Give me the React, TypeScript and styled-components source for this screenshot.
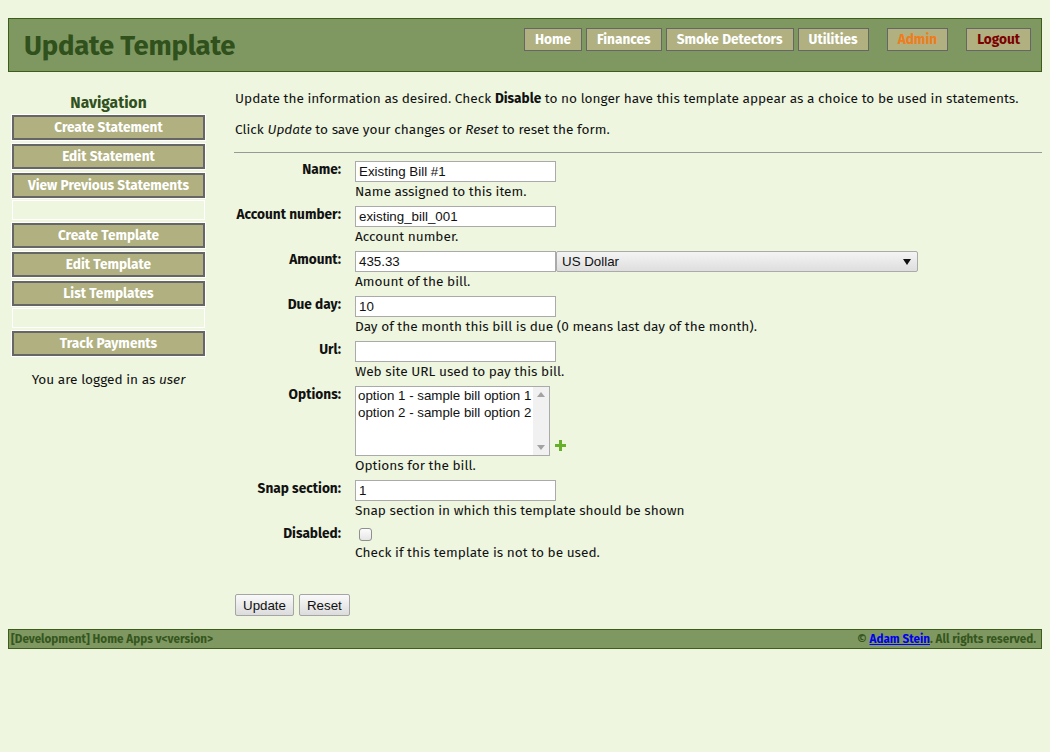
import React from "react";
import styled, { createGlobalStyle } from "styled-components";

const Global = createGlobalStyle`
  html, body { margin: 0; padding: 0; background: #eef6e0; }
  body { font-family: "Fira Sans", "Lato", "Open Sans", sans-serif; font-size: 13.65px; color: #111; }
  * { box-sizing: border-box; }
`;

const Page = styled.div`
  padding: 18px 8px 0 8px;
  width: 1050px;
`;

const Header = styled.header`
  height: 54px;
  background: #7f9862;
  border: 1px solid #3d5e1a;
  display: flex;
  align-items: center;
  justify-content: space-between;
  padding: 0 10px 0 15px;
`;

const Title = styled.h1`
  margin: 0;
  font-size: 27.5px;
  font-weight: 700;
  color: #30501c;
  letter-spacing: -0.2px;
`;

const TopNav = styled.nav`
  display: flex;
  align-items: center;
  gap: 4px;
  margin-top: -12px;
`;

const TopButton = styled.a<{ $tone?: "admin" | "logout"; $gap?: number }>`
  display: inline-flex;
  align-items: center;
  height: 23px;
  padding: 0 10px;
  background: #b0b080;
  border: 1px solid #666;
  font-weight: 700;
  font-size: 13.65px;
  text-decoration: none;
  color: ${(p) => (p.$tone === "admin" ? "#f07c1c" : p.$tone === "logout" ? "#7c0000" : "#fff")};
  margin-left: ${(p) => p.$gap ?? 0}px;
`;

const Body = styled.div`
  display: grid;
  grid-template-columns: 197px 1fr;
  column-gap: 30px;
  margin-top: 20px;
`;

const Sidebar = styled.aside`
  padding-left: 4px;
  display: flex;
  flex-direction: column;
  align-items: stretch;
`;

const NavHeading = styled.h2`
  margin: 1px 0 3px 0;
  text-align: center;
  font-size: 15.6px;
  font-weight: 700;
  color: #30501c;
`;

const SideButton = styled.a`
  display: flex;
  align-items: center;
  justify-content: center;
  height: 25px;
  margin-bottom: 4px;
  background: #b0b080;
  border: 2px solid #666;
  box-shadow: 0 0 0 1px #fff;
  color: #fff;
  font-weight: 700;
  font-size: 13.65px;
  text-decoration: none;
`;

const SideSpacer = styled.div`
  height: 20px;
  margin: -2px 0 3px 0;
  border: 1px solid #fff;
`;

const LoggedIn = styled.p`
  margin: 11px 0 0 0;
  text-align: center;
  font-size: 13.65px;
`;

const Main = styled.main`
  margin-top: -3px;
`;

const Para = styled.p`
  margin: 0 0 12px 0;
  line-height: 19px;
`;

const Rule = styled.hr`
  border: 0;
  border-top: 1px solid #999;
  margin: 13px 0 8px -1px;
`;

const Form = styled.div`
  display: grid;
  grid-template-columns: 106px 1fr;
  column-gap: 14px;
  row-gap: 6px;
`;

const Label = styled.label`
  text-align: right;
  font-weight: 700;
  font-size: 13.65px;
  line-height: 18px;
  white-space: nowrap;
`;

const Field = styled.div`
  display: flex;
  flex-direction: column;
  align-items: flex-start;
`;

const Control = styled.div`
  display: flex;
  align-items: flex-end;
`;

const TextInput = styled.input`
  width: 201px;
  height: 21px;
  border: 1px solid #aaa;
  background: #fff;
  font-family: "Liberation Sans", Arial, sans-serif;
  font-size: 13.33px;
  padding: 1px 3px;
  color: #111;
  margin: 0;
`;

const Select = styled.div`
  width: 362px;
  height: 21px;
  border: 1px solid #aaa;
  border-radius: 2px;
  background: linear-gradient(#f4f4f4, #dedede);
  font-family: "Liberation Sans", Arial, sans-serif;
  font-size: 13.33px;
  display: flex;
  align-items: center;
  justify-content: space-between;
  padding: 0 6px 0 5px;
`;

const ListBox = styled.div`
  width: 195px;
  height: 70px;
  border: 1px solid #aaa;
  background: #fff;
  display: flex;
  font-family: "Liberation Sans", Arial, sans-serif;
  font-size: 13.33px;
`;

const ListItems = styled.div`
  flex: 1;
  padding: 0 0 0 2px;
  line-height: 17px;
  white-space: nowrap;
  overflow: hidden;
`;

const ScrollTrack = styled.div`
  width: 16px;
  background: #f1f1f1;
  display: flex;
  flex-direction: column;
  justify-content: space-between;
  align-items: center;
  padding: 5px 0;
`;

const AddIcon = styled.span`
  margin: 0 0 5px 5px;
  display: inline-flex;
`;

const Help = styled.div`
  margin-top: 1px;
  line-height: 17px;
  font-size: 13.65px;
`;

const Check = styled.span`
  display: inline-block;
  width: 13px;
  height: 13px;
  margin: 3px 0 2px 4px;
  border: 1px solid #8f8f8f;
  border-radius: 3px;
  background: linear-gradient(#fcfcfc, #e6e6e6);
`;

const Actions = styled.div`
  display: flex;
  gap: 5px;
  margin-top: 33px;
`;

const Button = styled.button`
  height: 22px;
  padding: 0 7px;
  border: 1px solid #a5a5a5;
  border-radius: 2px;
  background: linear-gradient(#fafafa, #dcdcdc);
  font-family: "Liberation Sans", Arial, sans-serif;
  font-size: 13.33px;
  color: #111;
`;

const Footer = styled.footer`
  margin-top: 13px;
  height: 20px;
  background: #7f9862;
  border: 1px solid #3d5e1a;
  display: flex;
  align-items: center;
  justify-content: space-between;
  padding: 0 5px 0 2px;
  font-size: 11.7px;
  font-weight: 700;
  color: #35561d;
`;

const FooterLink = styled.a`
  color: #0000ee;
  text-decoration: underline;
`;

const Arrow = ({ up }: { up?: boolean }) => (
  <svg width="8" height="5" viewBox="0 0 8 5">
    <path d={up ? "M0 5 L4 0 L8 5 Z" : "M0 0 L8 0 L4 5 Z"} fill="#a3a3a3" />
  </svg>
);

const rows: { label: string; value: string; help: string }[] = [
  { label: "Name:", value: "Existing Bill #1", help: "Name assigned to this item." },
  { label: "Account number:", value: "existing_bill_001", help: "Account number." },
];

export default function App() {
  return (
    <>
      <Global />
      <Page>
        <Header>
          <Title>Update Template</Title>
          <TopNav>
            <TopButton href="#">Home</TopButton>
            <TopButton href="#">Finances</TopButton>
            <TopButton href="#">Smoke Detectors</TopButton>
            <TopButton href="#">Utilities</TopButton>
            <TopButton href="#" $tone="admin" $gap={14}>Admin</TopButton>
            <TopButton href="#" $tone="logout" $gap={14}>Logout</TopButton>
          </TopNav>
        </Header>
        <Body>
          <Sidebar>
            <NavHeading>Navigation</NavHeading>
            <SideButton href="#">Create Statement</SideButton>
            <SideButton href="#">Edit Statement</SideButton>
            <SideButton href="#">View Previous Statements</SideButton>
            <SideSpacer />
            <SideButton href="#">Create Template</SideButton>
            <SideButton href="#">Edit Template</SideButton>
            <SideButton href="#">List Templates</SideButton>
            <SideSpacer />
            <SideButton href="#">Track Payments</SideButton>
            <LoggedIn>
              You are logged in as <i>user</i>
            </LoggedIn>
          </Sidebar>
          <Main>
            <Para>
              Update the information as desired. Check <b>Disable</b> to no longer have this template appear as a choice to be used in statements.
            </Para>
            <Para>
              Click <i>Update</i> to save your changes or <i>Reset</i> to reset the form.
            </Para>
            <Rule />
            <Form>
              {rows.map((r) => (
                <React.Fragment key={r.label}>
                  <Label>{r.label}</Label>
                  <Field>
                    <TextInput defaultValue={r.value} />
                    <Help>{r.help}</Help>
                  </Field>
                </React.Fragment>
              ))}
              <Label>Amount:</Label>
              <Field>
                <Control>
                  <TextInput defaultValue="435.33" />
                  <Select>
                    <span>US Dollar</span>
                    <svg width="8" height="6" viewBox="0 0 8 6">
                      <path d="M0 0 L8 0 L4 6 Z" fill="#111" />
                    </svg>
                  </Select>
                </Control>
                <Help>Amount of the bill.</Help>
              </Field>
              <Label>Due day:</Label>
              <Field>
                <TextInput defaultValue="10" />
                <Help>Day of the month this bill is due (0 means last day of the month).</Help>
              </Field>
              <Label>Url:</Label>
              <Field>
                <TextInput defaultValue="" />
                <Help>Web site URL used to pay this bill.</Help>
              </Field>
              <Label>Options:</Label>
              <Field>
                <Control>
                  <ListBox>
                    <ListItems>
                      <div>option 1 - sample bill option 1</div>
                      <div>option 2 - sample bill option 2</div>
                    </ListItems>
                    <ScrollTrack>
                      <Arrow up />
                      <Arrow />
                    </ScrollTrack>
                  </ListBox>
                  <AddIcon>
                    <svg width="11" height="11" viewBox="0 0 11 11">
                      <path d="M4 0 H7 V4 H11 V7 H7 V11 H4 V7 H0 V4 H4 Z" fill="#66b02a" />
                    </svg>
                  </AddIcon>
                </Control>
                <Help>Options for the bill.</Help>
              </Field>
              <Label>Snap section:</Label>
              <Field>
                <TextInput defaultValue="1" />
                <Help>Snap section in which this template should be shown</Help>
              </Field>
              <Label>Disabled:</Label>
              <Field>
                <Check />
                <Help>Check if this template is not to be used.</Help>
              </Field>
            </Form>
            <Actions>
              <Button>Update</Button>
              <Button>Reset</Button>
            </Actions>
          </Main>
        </Body>
        <Footer>
          <span>[Development] Home Apps v&lt;version&gt;</span>
          <span>
            © <FooterLink href="#">Adam Stein</FooterLink>. All rights reserved.
          </span>
        </Footer>
      </Page>
    </>
  );
}
